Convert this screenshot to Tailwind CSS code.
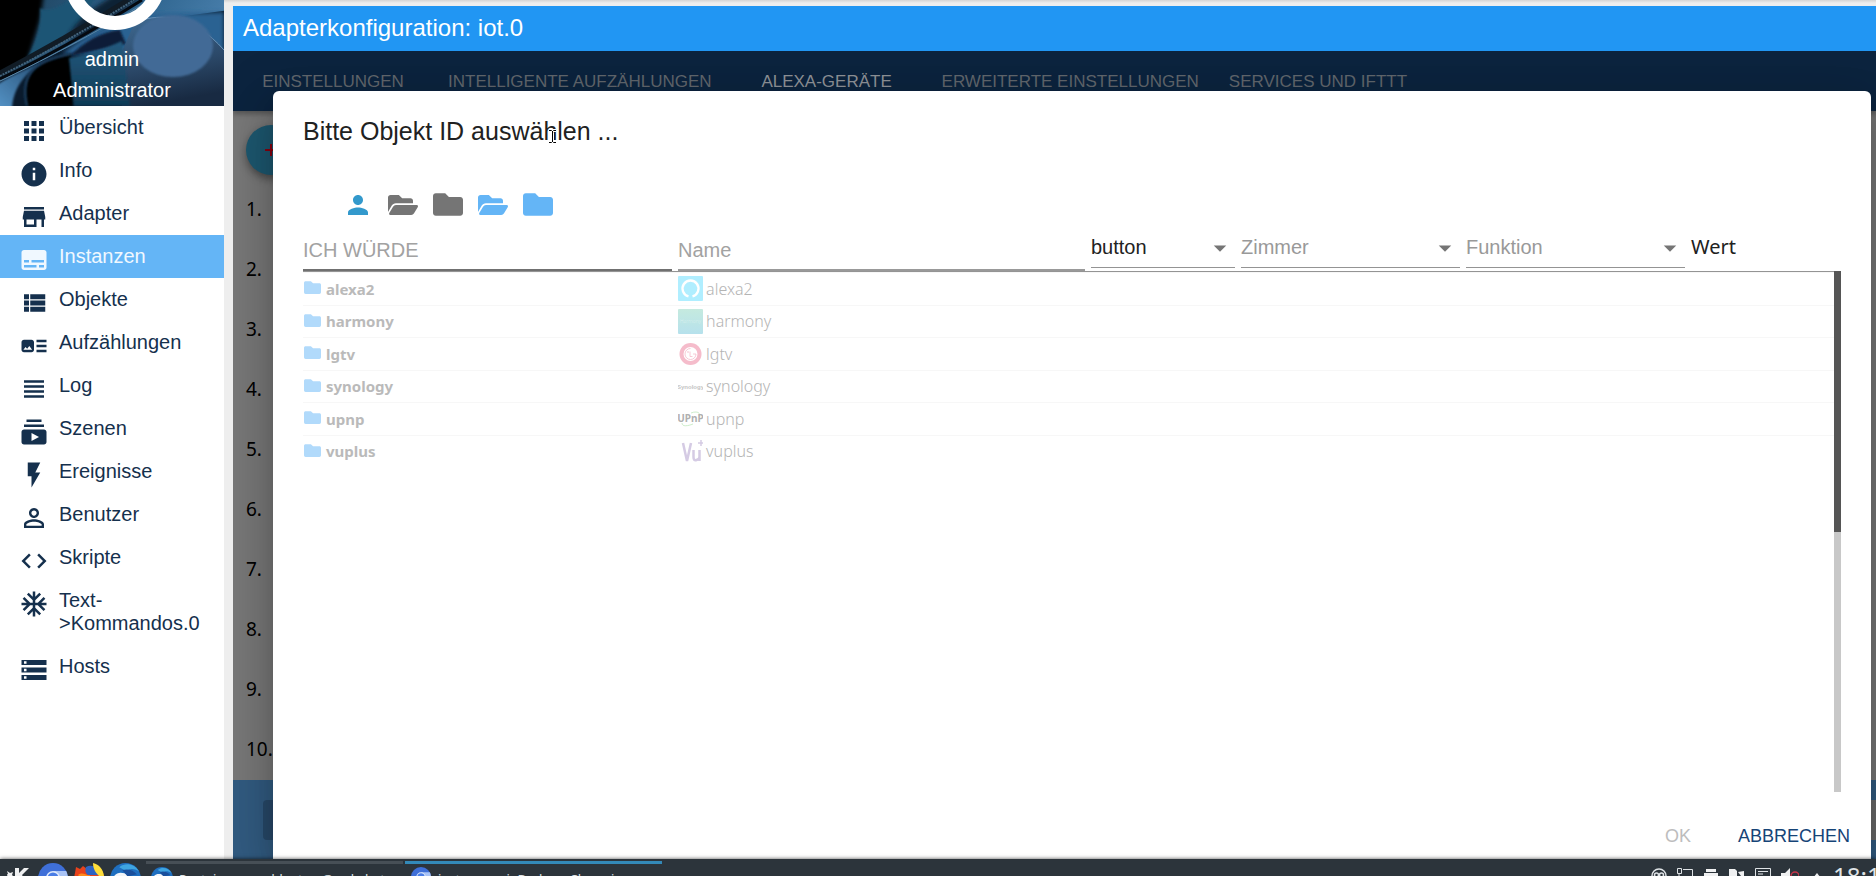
<!DOCTYPE html>
<html lang="de">
<head>
<meta charset="utf-8">
<title>Adapterkonfiguration: iot.0</title>
<script src="https://cdn.jsdelivr.net/npm/@tailwindcss/browser@4"></script>
</head>
<body class="h-screen overflow-hidden bg-[#eeeeee] font-['Liberation_Sans',Arial,sans-serif] flex flex-col">

<svg class="hidden">
  <symbol id="folder" viewBox="0 64 512 384"><path d="M464 128H272l-64-64H48C21.490 64 0 85.490 0 112v288c0 26.510 21.490 48 48 48h416c26.510 0 48-21.490 48-48V176c0-26.510-21.490-48-48-48z"/></symbol>
  <symbol id="folder-open" viewBox="0 64 576 384"><path d="M572.694 292.093L500.270 416.248A63.997 63.997 0 0 1 444.989 448H45.025c-18.523 0-30.064-20.093-20.731-36.093l72.424-124.155A64 64 0 0 1 152 256h399.964c18.523 0 30.064 20.093 20.730 36.093zM152 224h328v-48c0-26.510-21.490-48-48-48H272l-64-64H48C21.490 64 0 85.490 0 112v278.046l69.077-118.418C86.214 242.250 117.989 224 152 224z"/></symbol>
  <symbol id="chromium" viewBox="0 0 30 30"><circle cx="15" cy="15" r="15" fill="#3f6fd8"/><path d="M15 8h13.200A15 15 0 0 1 15 30l7-13z" fill="#a9c3f5"/><circle cx="15" cy="15" r="7" fill="#dfe9fb"/><circle cx="15" cy="15" r="5.500" fill="#4a7de6"/></symbol>
  <symbol id="thunderbird" viewBox="0 0 30 30"><circle cx="15" cy="15" r="15" fill="#1f6fc0"/><path d="M9 4C15-1 24 1 28 8c-5-3-9-3-12 0z" fill="#3fa5e0"/><path d="M3 14c3-5 7-5 11-4l8 4-2 16H6z" fill="#f2f4f8"/><path d="M12 7c5-2 11 0 14 4l-9 2z" fill="#1a4f9c"/></symbol>
</svg>

<div class="flex-1 min-h-0 flex">

  <!-- Navigation -->
  <aside class="w-56 shrink-0 bg-white overflow-hidden">
    <header class="relative h-[106px] overflow-hidden text-white text-xl text-center">
      <svg class="absolute inset-0 w-full h-full" viewBox="0 0 224 106" preserveAspectRatio="none">
        <defs>
          <linearGradient id="sky" x1="0" y1="0" x2="1" y2=".3"><stop offset="0" stop-color="#1d3f58"/><stop offset=".6" stop-color="#2f658f"/><stop offset="1" stop-color="#4a80ad"/></linearGradient>
          <linearGradient id="pet" x1="0" y1="0" x2=".2" y2="1"><stop offset="0" stop-color="#3f6a92"/><stop offset=".6" stop-color="#2b4868"/><stop offset="1" stop-color="#182a42"/></linearGradient>
          <linearGradient id="teal" x1="0" y1="0" x2="0" y2="1"><stop offset="0" stop-color="#245a7e"/><stop offset="1" stop-color="#103a56"/></linearGradient>
          <linearGradient id="streak" x1="0" y1="1" x2="1" y2="0"><stop offset="0" stop-color="#5593c6"/><stop offset="1" stop-color="#173a5c"/></linearGradient>
          <filter id="soft"><feGaussianBlur stdDeviation="2"/></filter>
          <filter id="softer"><feGaussianBlur stdDeviation="1"/></filter>
        </defs>
        <rect width="224" height="106" fill="url(#sky)"/>
        <path d="M-6-6h50l-4 26-12 40-34 20z" fill="#000" filter="url(#soft)"/>
        <path d="M40 8c8 4 20 0 32-10h22C88 20 60 44 26 60 36 44 42 26 40 8z" fill="#1e5575" filter="url(#softer)"/>
        <path d="M66 40c10-20 24-30 50-46h30L90 34z" fill="#0b2335" filter="url(#soft)"/>
        <path d="M-4 84C26 68 70 46 112 26L230 10v100H-4z" fill="#0a1a2c"/>
        <path d="M62 54C90 30 120 18 150 14l74-2v44H110z" fill="#2c6292" filter="url(#soft)"/>
        <path d="M70 56c14-14 30-24 50-26l6 14z" fill="#0b1f38" filter="url(#softer)"/>
        <path d="M134 24C160 10 196 16 224 50v56H122l-2-50z" fill="url(#pet)"/>
        <path d="M136 22c26-10 58-6 88 28" fill="none" stroke="#6a95bb" stroke-width="1"/>
        <path d="M-2 84C16 72 36 66 58 54 34 66 14 80 12 108H-2z" fill="url(#streak)" filter="url(#softer)"/>
        <path d="M27 106c-6-34 10-44 44-52l2 52z" fill="#000" filter="url(#softer)"/>
        <path d="M27 106c-8-34 10-46 44-52" fill="none" stroke="#1f4468" stroke-width="2" filter="url(#softer)"/>
        <path d="M69 58c18-3 38-10 53-17l8 65H74z" fill="url(#teal)" filter="url(#softer)"/>
        <ellipse cx="173" cy="46" rx="40" ry="31" fill="#426b96" filter="url(#softer)"/>
        <path d="M0 73C40 52 86 26 128 0" stroke="#111c26" stroke-width="5" fill="none"/>
        <path d="M0 76C40 56 90 28 134 0" stroke="#44647c" stroke-width="2" stroke-dasharray="2 1" fill="none"/>
        <path d="M0 79C40 60 94 30 142 0" stroke="#05090f" stroke-width="3" fill="none"/>
        <path d="M0 81C36 64 94 34 150 0" stroke="#5b86a6" stroke-width="1" fill="none"/>
        <circle cx="115" cy="-21" r="44" fill="none" stroke="#fff" stroke-width="14"/>
      </svg>
      <div class="relative pt-11 leading-[31px]"><p>admin</p><p>Administrator</p></div>
    </header>
    <nav class="text-xl leading-[23px] text-[#15304d]">
      <a href="#" class="flex items-start gap-[10px] pt-[10px] pb-[3px] pl-[19px]"><svg class="w-[30px] h-[30px] shrink-0" viewBox="0 0 24 24" fill="currentColor"><path d="M4 8h4V4H4v4zm6 12h4v-4h-4v4zm-6 0h4v-4H4v4zm0-6h4v-4H4v4zm6 0h4v-4h-4v4zm6-10v4h4V4h-4zm-6 4h4V4h-4v4zm6 6h4v-4h-4v4zm0 6h4v-4h-4v4z"/></svg><span>Übersicht</span></a>
      <a href="#" class="flex items-start gap-[10px] pt-[10px] pb-[3px] pl-[19px]"><svg class="w-[30px] h-[30px] shrink-0" viewBox="0 0 24 24" fill="currentColor"><path d="M12 2C6.480 2 2 6.480 2 12s4.480 10 10 10 10-4.480 10-10S17.520 2 12 2zm1 15h-2v-6h2v6zm0-8h-2V7h2v2z"/></svg><span>Info</span></a>
      <a href="#" class="flex items-start gap-[10px] pt-[10px] pb-[3px] pl-[19px]"><svg class="w-[30px] h-[30px] shrink-0" viewBox="0 0 24 24" fill="currentColor"><path d="M20 4H4v2h16V4zm1 10v-2l-1-5H4l-1 5v2h1v6h10v-6h4v6h2v-6h1zm-9 4H6v-4h6v4z"/></svg><span>Adapter</span></a>
      <a href="#" class="flex items-start gap-[10px] pt-[10px] pb-[3px] pl-[19px] bg-[#64b5f6] text-[#f0f8ff]"><svg class="w-[30px] h-[30px] shrink-0" viewBox="0 0 24 24" fill="currentColor"><path d="M20 4H4c-1.100 0-2 .9-2 2v12c0 1.100.9 2 2 2h16c1.100 0 2-.9 2-2V6c0-1.100-.9-2-2-2zM4 12h4v2H4v-2zm10 6H4v-2h10v2zm6 0h-4v-2h4v2zm0-4H10v-2h10v2z"/></svg><span>Instanzen</span></a>
      <a href="#" class="flex items-start gap-[10px] pt-[10px] pb-[3px] pl-[19px]"><svg class="w-[30px] h-[30px] shrink-0" viewBox="0 0 24 24" fill="currentColor"><path d="M4 14h4v-4H4v4zm0 5h4v-4H4v4zM4 9h4V5H4v4zm5 5h12v-4H9v4zm0 5h12v-4H9v4zM9 5v4h12V5H9z"/></svg><span>Objekte</span></a>
      <a href="#" class="flex items-start gap-[10px] pt-[10px] pb-[3px] pl-[19px]"><svg class="w-[30px] h-[30px] shrink-0" viewBox="0 0 24 24" fill="currentColor"><path d="M22 13h-8v-2h8v2zm0-6h-8v2h8V7zm-8 10h8v-2h-8v2zm-2-8v6c0 1.100-.9 2-2 2H4c-1.100 0-2-.9-2-2V9c0-1.100.9-2 2-2h6c1.100 0 2 .9 2 2zm-1.500 6l-2.250-3-1.750 2.260-1.250-1.510L3.500 15h7z"/></svg><span>Aufzählungen</span></a>
      <a href="#" class="flex items-start gap-[10px] pt-[10px] pb-[3px] pl-[19px]"><svg class="w-[30px] h-[30px] shrink-0" viewBox="0 0 24 24" fill="currentColor"><path d="M4 15h16v-2H4v2zm0 4h16v-2H4v2zm0-8h16V9H4v2zm0-6v2h16V5H4z"/></svg><span>Log</span></a>
      <a href="#" class="flex items-start gap-[10px] pt-[10px] pb-[3px] pl-[19px]"><svg class="w-[30px] h-[30px] shrink-0" viewBox="0 0 24 24" fill="currentColor"><path d="M20 8H4V6h16v2zm-2-6H6v2h12V2zm4 10v8c0 1.100-.9 2-2 2H4c-1.100 0-2-.9-2-2v-8c0-1.100.9-2 2-2h16c1.100 0 2 .9 2 2zm-6 4l-6-3.270v6.530L16 16z"/></svg><span>Szenen</span></a>
      <a href="#" class="flex items-start gap-[10px] pt-[10px] pb-[3px] pl-[19px]"><svg class="w-[30px] h-[30px] shrink-0" viewBox="0 0 24 24" fill="currentColor"><path d="M7 2v11h3v9l7-12h-4l4-8z"/></svg><span>Ereignisse</span></a>
      <a href="#" class="flex items-start gap-[10px] pt-[10px] pb-[3px] pl-[19px]"><svg class="w-[30px] h-[30px] shrink-0" viewBox="0 0 24 24" fill="currentColor"><path d="M12 5.900c1.160 0 2.100.94 2.100 2.100s-.94 2.100-2.100 2.100S9.900 9.160 9.900 8s.94-2.100 2.100-2.100m0 9c2.970 0 6.100 1.460 6.100 2.100v1.100H5.900V17c0-.64 3.130-2.100 6.100-2.100M12 4C9.790 4 8 5.790 8 8s1.790 4 4 4 4-1.790 4-4-1.790-4-4-4zm0 9c-2.670 0-8 1.340-8 4v3h16v-3c0-2.660-5.330-4-8-4z"/></svg><span>Benutzer</span></a>
      <a href="#" class="flex items-start gap-[10px] pt-[10px] pb-[3px] pl-[19px]"><svg class="w-[30px] h-[30px] shrink-0" viewBox="0 0 24 24" fill="currentColor"><path d="M9.400 16.600L4.800 12l4.600-4.600L8 6l-6 6 6 6 1.400-1.400zm5.200 0l4.600-4.600-4.600-4.600L16 6l6 6-6 6-1.400-1.400z"/></svg><span>Skripte</span></a>
      <a href="#" class="flex items-start gap-[10px] pt-[10px] pb-[3px] pl-[19px]"><svg class="w-[30px] h-[30px] shrink-0" viewBox="0 0 24 24" fill="currentColor"><path d="M22 11h-4.170l3.240-3.240-1.410-1.420L15 11h-2V9l4.660-4.660-1.420-1.410L13 6.170V2h-2v4.170L7.760 2.930 6.340 4.340 11 9v2H9L4.340 6.340 2.930 7.760 6.170 11H2v2h4.170l-3.240 3.240 1.410 1.420L9 13h2v2l-4.660 4.660 1.420 1.410L11 17.830V22h2v-4.170l3.240 3.240 1.420-1.410L13 15v-2h2l4.660 4.660 1.410-1.420L17.830 13H22z"/></svg><span class="pb-[7px]">Text-<br>&gt;Kommandos.0</span></a>
      <a href="#" class="flex items-start gap-[10px] pt-[10px] pb-[3px] pl-[19px]"><svg class="w-[30px] h-[30px] shrink-0" viewBox="0 0 24 24" fill="currentColor"><path d="M2 20h20v-4H2v4zm2-3h2v2H4v-2zM2 4v4h20V4H2zm4 3H4V5h2v2zm-4 7h20v-4H2v4zm2-3h2v2H4v-2z"/></svg><span>Hosts</span></a>
    </nav>
  </aside>

  <!-- Adapter configuration -->
  <main class="flex-1 min-w-0 flex flex-col">
    <div class="h-[6px] shrink-0 bg-linear-to-b from-[#d4d4d4] to-[#eeeeee] to-50%"></div>
    <section class="flex-1 min-h-0 ml-[9px] flex flex-col">
      <h1 class="h-[45px] shrink-0 bg-[#2196f3] text-white text-2xl leading-[43px] pl-[10px]">Adapterkonfiguration: iot.0</h1>

      <div class="relative flex-1 min-h-0 overflow-hidden flex flex-col bg-[#797979]">
        <div class="relative h-[60px] shrink-0 flex bg-[#0c243f] text-[17px] text-[#62686e] shadow-[0_3px_5px_rgba(0,0,0,.3)]">
          <button class="min-w-[200px] px-[15px] pt-[2px]">EINSTELLUNGEN</button>
          <button class="min-w-[200px] px-[15px] pt-[2px]">INTELLIGENTE AUFZÄHLUNGEN</button>
          <button class="min-w-[200px] px-[15px] pt-[2px] text-[#91959a]">ALEXA-GERÄTE</button>
          <button class="min-w-[200px] px-[15px] pt-[2px]">ERWEITERTE EINSTELLUNGEN</button>
          <button class="min-w-[200px] px-[15px] pt-[2px]">SERVICES UND IFTTT</button>
        </div>
        <div class="flex-1 min-h-0 overflow-hidden pl-[13px] pt-[14px]">
          <button class="block w-[50px] h-[50px] rounded-full bg-[#1d5870] text-[#8b0010] shadow-[0_4px_8px_rgba(0,0,0,.4)]" aria-label="Hinzufügen"><svg class="w-[22px] h-[22px] mx-auto" viewBox="0 0 22 22"><path d="M5 11h12M11 5v12" stroke="currentColor" stroke-width="2"/></svg></button>
          <ol class="pt-1 font-['Noto_Sans',sans-serif] text-[19px] leading-[60px] text-black">
            <li>1.</li><li>2.</li><li>3.</li><li>4.</li><li>5.</li><li>6.</li><li>7.</li><li>8.</li><li>9.</li><li>10.</li>
          </ol>
        </div>
        <div class="h-[79px] shrink-0 bg-[#325c82] pt-5 pl-[30px]">
          <div class="h-10 rounded-l-sm bg-linear-to-r from-[#28496a] from-10% to-[#6b6b6b] to-90%"></div>
        </div>

        <!-- Object selection dialog -->
        <div role="dialog" aria-labelledby="dlg-title" class="absolute left-10 right-[5px] top-10 bottom-0 rounded-t-md bg-white flex flex-col shadow-[0_12px_20px_-8px_rgba(0,0,0,.2),0_20px_45px_4px_rgba(0,0,0,.14),0_10px_56px_10px_rgba(0,0,0,.12)]">
          <h2 id="dlg-title" class="relative pt-5 pl-[30px] text-[25px] leading-10 text-[#212121]">Bitte Objekt ID auswählen ...
            <svg class="absolute left-[275px] top-[38px] w-[9px] h-[15px]" viewBox="0 0 9 15" fill="none"><path d="M1 1.500h2.500l1 1 1-1H8M4.500 2v11M1 13.500h2.500l1-1 1 1H8" stroke="#fff" stroke-width="3"/><path d="M1 1.500h2.500l1 1 1-1H8M4.500 2v11M1 13.500h2.500l1-1 1 1H8" stroke="#000"/></svg>
          </h2>
          <div class="mt-[31px] pl-[62px] h-[45px] shrink-0 flex text-[#757575]">
            <button class="w-[45px] flex items-center justify-center text-[#3399cc]" aria-label="Expertenmodus"><svg class="w-[30px] h-[30px]" viewBox="0 0 24 24" fill="currentColor"><path d="M12 12c2.210 0 4-1.790 4-4s-1.790-4-4-4-4 1.790-4 4 1.790 4 4 4zm0 2c-2.670 0-8 1.340-8 4v2h16v-2c0-2.660-5.330-4-8-4z"/></svg></button>
            <button class="w-[45px] flex items-center justify-center" aria-label="Alle aufklappen"><svg class="w-[30px] h-5" fill="currentColor"><use href="#folder-open"/></svg></button>
            <button class="w-[45px] flex items-center justify-center" aria-label="Alle zuklappen"><svg class="w-[30px] h-[23px]" fill="currentColor"><use href="#folder"/></svg></button>
            <button class="w-[45px] flex items-center justify-center text-[#64b5f6]" aria-label="Eine Ebene aufklappen"><svg class="w-[30px] h-5" fill="currentColor"><use href="#folder-open"/></svg></button>
            <button class="w-[45px] flex items-center justify-center text-[#64b5f6]" aria-label="Eine Ebene zuklappen"><svg class="w-[30px] h-[23px]" fill="currentColor"><use href="#folder"/></svg></button>
          </div>

          <div class="h-11 shrink-0 mx-[30px] grid grid-cols-[369fr_407fr_144fr_219fr_219fr_150fr] gap-[6px] text-xl">
            <input aria-label="ID" placeholder="ICH WÜRDE" class="min-w-0 pt-[3px] outline-none border-b-2 border-[#707070] placeholder:text-[#a2a2a2]">
            <input aria-label="Name" placeholder="Name" class="min-w-0 pt-[3px] outline-none border-b-2 border-[#999] placeholder:text-[#a2a2a2]">
            <div class="relative h-[41px] border-b border-[#949494]"><select aria-label="Rolle" class="w-full h-full appearance-none outline-none text-[#222]"><option>button</option></select><svg class="absolute right-0 top-[6px] w-[30px] h-[30px] pointer-events-none" viewBox="0 0 24 24" fill="#757575"><path d="M7 10l5 5 5-5z"/></svg></div>
            <div class="relative h-[41px] border-b border-[#949494]"><select aria-label="Zimmer" class="w-full h-full appearance-none outline-none text-[#999]"><option>Zimmer</option></select><svg class="absolute right-0 top-[6px] w-[30px] h-[30px] pointer-events-none" viewBox="0 0 24 24" fill="#757575"><path d="M7 10l5 5 5-5z"/></svg></div>
            <div class="relative h-[41px] border-b border-[#949494]"><select aria-label="Funktion" class="w-full h-full appearance-none outline-none text-[#999]"><option>Funktion</option></select><svg class="absolute right-0 top-[6px] w-[30px] h-[30px] pointer-events-none" viewBox="0 0 24 24" fill="#757575"><path d="M7 10l5 5 5-5z"/></svg></div>
            <div class="h-10 leading-10 font-['Noto_Sans',sans-serif] text-xl text-[#212121]">Wert</div>
          </div>

          <div class="flex-1 min-h-0 mx-[30px] flex">
            <div class="flex-1 min-w-0 border-t border-[#949494]">
              <table class="w-full h-[195px] table-fixed border-collapse font-['Noto_Sans',sans-serif] text-base leading-6 text-[#b4b4b4]">
                <colgroup><col class="w-[24.5%]"><col></colgroup>
                <tbody>
                  <tr class="border-y border-[#f7f7f7]"><th class="p-0 text-left text-[15px] text-[#bababa] font-bold"><span class="flex items-center gap-[5px]"><svg class="ml-px mb-[2px] w-[17px] h-[13px] text-[#b1dafb]" fill="currentColor"><use href="#folder"/></svg>alexa2</span></th>
                    <td class="p-0 font-light"><span class="flex items-center gap-[3px]"><svg class="w-[25px] h-[25px]" viewBox="0 0 25 25"><rect width="25" height="25" rx="1" fill="#b0eeff"/><path d="M10.500 20.300A8 8 0 1 1 14.500 20.300" fill="none" stroke="#fff" stroke-width="2.400"/></svg>alexa2</span></td></tr>
                  <tr class="border-b border-[#f7f7f7]"><th class="p-0 text-left text-[15px] text-[#bababa] font-bold"><span class="flex items-center gap-[5px]"><svg class="ml-px mb-[2px] w-[17px] h-[13px] text-[#b1dafb]" fill="currentColor"><use href="#folder"/></svg>harmony</span></th>
                    <td class="p-0 font-light"><span class="flex items-center gap-[3px]"><svg class="w-[25px] h-[25px]" viewBox="0 0 25 25"><defs><linearGradient id="hm" x1="0" y1="0" x2="0" y2="1"><stop stop-color="#c5eadf"/><stop offset="1" stop-color="#b6e1ec"/></linearGradient></defs><rect width="25" height="25" rx="1" fill="url(#hm)"/><text x="12.500" y="14" font-size="5" text-anchor="middle" fill="#d8f1f0">Harmony</text></svg>harmony</span></td></tr>
                  <tr class="border-b border-[#f7f7f7]"><th class="p-0 text-left text-[15px] text-[#bababa] font-bold"><span class="flex items-center gap-[5px]"><svg class="ml-px mb-[2px] w-[17px] h-[13px] text-[#b1dafb]" fill="currentColor"><use href="#folder"/></svg>lgtv</span></th>
                    <td class="p-0 font-light"><span class="flex items-center gap-[3px]"><svg class="w-[25px] h-[25px]" viewBox="0 0 25 25"><circle cx="12.500" cy="13" r="11" fill="#f5bccb"/><circle cx="12.500" cy="13" r="7" fill="#fff"/><path d="M12.500 7.500a5.500 5.500 0 1 0 5.500 5.500h-3M12 10.500v5h2.500" fill="none" stroke="#f5bccb" stroke-width=".8"/><circle cx="10" cy="11" r=".8" fill="#f5bccb"/></svg>lgtv</span></td></tr>
                  <tr class="border-b border-[#f7f7f7]"><th class="p-0 text-left text-[15px] text-[#bababa] font-bold"><span class="flex items-center gap-[5px]"><svg class="ml-px mb-[2px] w-[17px] h-[13px] text-[#b1dafb]" fill="currentColor"><use href="#folder"/></svg>synology</span></th>
                    <td class="p-0 font-light"><span class="flex items-center gap-[3px]"><svg class="w-[25px] h-[25px]" viewBox="0 0 25 25"><text x="12.500" y="15" font-size="6" font-weight="700" text-anchor="middle" fill="#c4c4c4" font-family="Liberation Sans">Synology</text></svg>synology</span></td></tr>
                  <tr class="border-b border-[#f7f7f7]"><th class="p-0 text-left text-[15px] text-[#bababa] font-bold"><span class="flex items-center gap-[5px]"><svg class="ml-px mb-[2px] w-[17px] h-[13px] text-[#b1dafb]" fill="currentColor"><use href="#folder"/></svg>upnp</span></th>
                    <td class="p-0 font-light"><span class="flex items-center gap-[3px]"><svg class="w-[25px] h-[25px]" viewBox="0 0 25 25"><path d="M13 7c5-2 10-1 8 3M4 17c0 4 6 3 11 1" fill="none" stroke="#cdeecb"/><text x="12.500" y="16" font-size="10" font-weight="700" text-anchor="middle" fill="#b0b0b0" font-family="Noto Sans">UPnP</text></svg>upnp</span></td></tr>
                  <tr><th class="p-0 text-left text-[15px] text-[#bababa] font-bold"><span class="flex items-center gap-[5px]"><svg class="ml-px mb-[2px] w-[17px] h-[13px] text-[#b1dafb]" fill="currentColor"><use href="#folder"/></svg>vuplus</span></th>
                    <td class="p-0 font-light"><span class="flex items-center gap-[3px]"><svg class="w-[25px] h-[25px]" viewBox="0 0 25 25" fill="none" stroke="#d5cbe4"><path d="M5 4l4 18 4-18M15.500 11v7q0 4 3 3t3-3v-7M21.500 11v11" stroke-width="2.500"/><path d="M23 1v6M20 4h5" stroke-width="1.500"/></svg>vuplus</span></td></tr>
                </tbody>
              </table>
            </div>
            <div class="w-[7px] bg-[#c8c8c8]"><div class="h-1/2 bg-[#555]"></div></div>
          </div>

          <div class="h-[67px] shrink-0 pr-[11px] flex items-end justify-end gap-[10px] pb-px text-lg">
            <button disabled class="h-[45px] w-[80px] text-[#bdbdbd]">OK</button>
            <button class="h-[45px] px-[10px] text-[#164477]">ABBRECHEN</button>
          </div>
        </div>
      </div>
    </section>
  </main>
</div>

<!-- Desktop panel -->
<footer class="relative h-[17px] shrink-0 bg-[#2c343b] shadow-[0_0_4px_rgba(0,0,0,.7)] flex items-start overflow-hidden text-[#dfe3e6] font-['Noto_Sans',sans-serif] text-[13px] leading-5">
  <svg class="ml-[7px] mt-[9px] w-[22px] h-6" viewBox="0 0 22 24" fill="#eff0f1"><path d="M8 0h4v5l5-5h5l-7 7 6 9h-5l-4-6v5H8zM0 3l3 2 3-1-1 3 3 3-4-1-2 3-1-4-2-1 2-1zM0 12h4v3H0z"/></svg>
  <svg class="ml-[9px] mt-1 w-[30px] h-[30px]"><use href="#chromium"/></svg>
  <svg class="ml-[6px] mt-1 w-[31px] h-[30px]" viewBox="0 0 31 30"><path d="M2 4l4 2 3-3 4 3c6-4 12-3 15 2 5 8 1 20-10 21C6 30-2 20 1 10z" fill="#e8421c"/><path d="M12 4c6-3 12 0 14 8H14c-3-2-3-5-2-8z" fill="#2e64c4"/><path d="M19 0c8 2 12 9 11 18-3-4-11-8-11-18z" fill="#ffde3b"/><path d="M4 12c5-4 8 1 12 0l-4 9z" fill="#ff8b1c"/></svg>
  <svg class="ml-[5px] mt-1 w-[31px] h-[31px]"><use href="#thunderbird"/></svg>
  <div class="ml-[5px] mt-[2px] w-[257px] border-t-[3px] border-[#474f56] pl-[5px] flex gap-[6px]"><svg class="mt-[3px] w-[22px] h-[22px] shrink-0"><use href="#thunderbird"/></svg><span class="pt-[5px] whitespace-nowrap">Posteingang - ddeutzer@webchat</span></div>
  <div class="ml-[2px] mt-[2px] w-[257px] border-t-[3px] border-[#3389b8] pl-[6px] flex gap-[7px]"><svg class="mt-[3px] w-5 h-5 shrink-0"><use href="#chromium"/></svg><span class="pt-[5px] whitespace-nowrap">instances - ioBroker - Chromium</span></div>
  <div class="ml-auto mt-[9px] flex shrink-0 gap-[10px]">
    <svg class="w-4 h-4" viewBox="0 0 16 16" fill="none" stroke="#dfe3e6" stroke-width="1.500"><circle cx="8" cy="8" r="7"/><circle cx="5.500" cy="7" r="2"/><circle cx="10.500" cy="7" r="2"/></svg>
    <svg class="w-4 h-4" viewBox="0 0 16 16" fill="none" stroke="#dfe3e6"><path d="M.5.500h4v5h-4zM6 1.500h9.500v10H4M2 6v6"/></svg>
    <svg class="w-4 h-4" viewBox="0 0 16 16" fill="#eff0f1"><path d="M3 1h10v3H3zM1 5h14v8H1z"/></svg>
    <svg class="w-4 h-4" viewBox="0 0 16 16" fill="#eff0f1"><path d="M0 1h6l2 2v10H0zM9 4l6-1v9l-8 1 5-5z"/></svg>
    <svg class="w-4 h-4" viewBox="0 0 16 16" fill="none" stroke="#dfe3e6"><path d="M.5.500h15v14H.5zM3 3.500h10M3 6h5"/></svg>
    <svg class="w-[18px] h-4" viewBox="0 0 18 16"><path d="M0 5h4l5-5v16l-5-5H0z" fill="#eff0f1"/><circle cx="14" cy="8" r="4" fill="none" stroke="#c8344a" stroke-width="1.500"/></svg>
    <svg class="mt-1 w-4 h-4" viewBox="0 0 16 16" fill="#eff0f1"><path d="M8 1l4 5H4z"/></svg>
  </div>
  <time class="ml-2 w-[43px] shrink-0 pt-[3px] leading-7 text-2xl whitespace-nowrap overflow-hidden">18:1</time>
</footer>
</body>
</html>
